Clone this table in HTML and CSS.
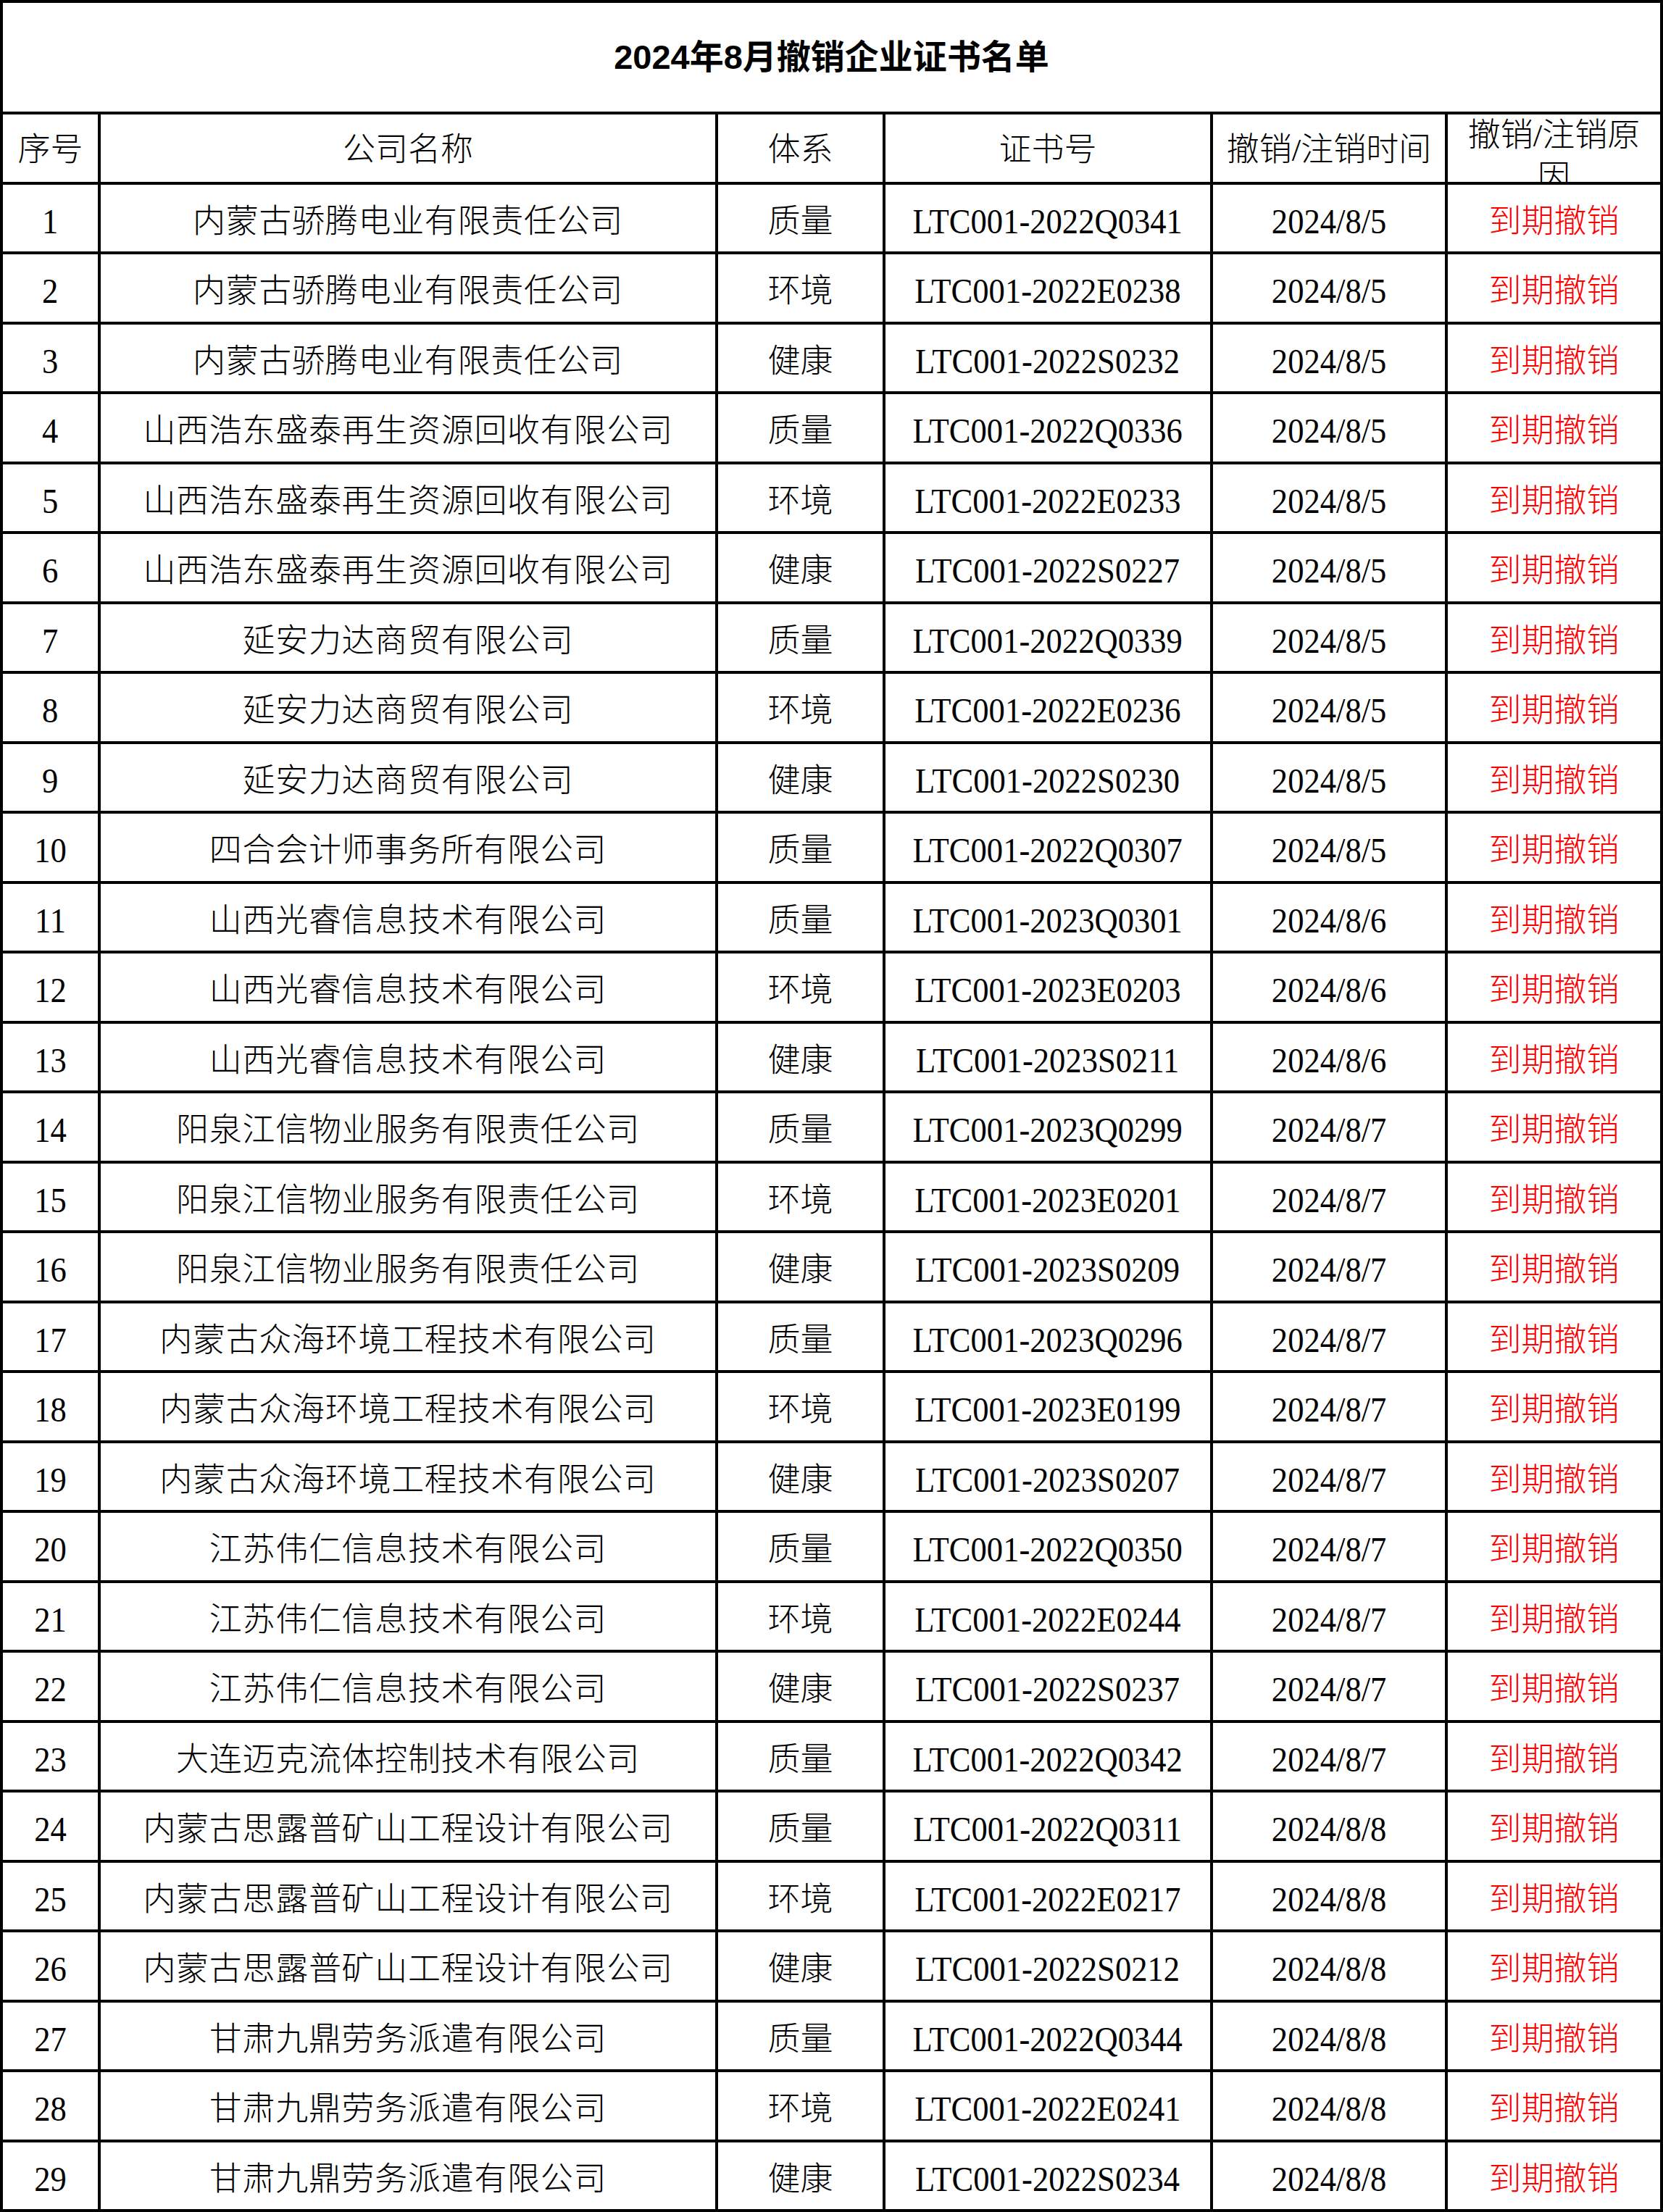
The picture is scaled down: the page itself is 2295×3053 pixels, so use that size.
FILE: index.html
```html
<!DOCTYPE html>
<html lang="zh-CN">
<head>
<meta charset="utf-8">
<title>2024年8月撤销企业证书名单</title>
<link rel="stylesheet" href="styles.css">
</head>
<body>
<div class="sheet">
  <div class="cell title">2024年8月撤销企业证书名单</div>

  <div class="cell head">序号</div>
  <div class="cell head">公司名称</div>
  <div class="cell head">体系</div>
  <div class="cell head">证书号</div>
  <div class="cell head">撤销/注销时间</div>
  <div class="cell head wrap">撤销/注销原因</div>

  <div class="cell"><span class="num">1</span></div><div class="cell name">内蒙古骄腾电业有限责任公司</div><div class="cell">质量</div><div class="cell"><span class="num">LTC001-2022Q0341</span></div><div class="cell"><span class="num">2024/8/5</span></div><div class="cell red">到期撤销</div>
  <div class="cell"><span class="num">2</span></div><div class="cell name">内蒙古骄腾电业有限责任公司</div><div class="cell">环境</div><div class="cell"><span class="num">LTC001-2022E0238</span></div><div class="cell"><span class="num">2024/8/5</span></div><div class="cell red">到期撤销</div>
  <div class="cell"><span class="num">3</span></div><div class="cell name">内蒙古骄腾电业有限责任公司</div><div class="cell">健康</div><div class="cell"><span class="num">LTC001-2022S0232</span></div><div class="cell"><span class="num">2024/8/5</span></div><div class="cell red">到期撤销</div>
  <div class="cell"><span class="num">4</span></div><div class="cell name">山西浩东盛泰再生资源回收有限公司</div><div class="cell">质量</div><div class="cell"><span class="num">LTC001-2022Q0336</span></div><div class="cell"><span class="num">2024/8/5</span></div><div class="cell red">到期撤销</div>
  <div class="cell"><span class="num">5</span></div><div class="cell name">山西浩东盛泰再生资源回收有限公司</div><div class="cell">环境</div><div class="cell"><span class="num">LTC001-2022E0233</span></div><div class="cell"><span class="num">2024/8/5</span></div><div class="cell red">到期撤销</div>
  <div class="cell"><span class="num">6</span></div><div class="cell name">山西浩东盛泰再生资源回收有限公司</div><div class="cell">健康</div><div class="cell"><span class="num">LTC001-2022S0227</span></div><div class="cell"><span class="num">2024/8/5</span></div><div class="cell red">到期撤销</div>
  <div class="cell"><span class="num">7</span></div><div class="cell name">延安力达商贸有限公司</div><div class="cell">质量</div><div class="cell"><span class="num">LTC001-2022Q0339</span></div><div class="cell"><span class="num">2024/8/5</span></div><div class="cell red">到期撤销</div>
  <div class="cell"><span class="num">8</span></div><div class="cell name">延安力达商贸有限公司</div><div class="cell">环境</div><div class="cell"><span class="num">LTC001-2022E0236</span></div><div class="cell"><span class="num">2024/8/5</span></div><div class="cell red">到期撤销</div>
  <div class="cell"><span class="num">9</span></div><div class="cell name">延安力达商贸有限公司</div><div class="cell">健康</div><div class="cell"><span class="num">LTC001-2022S0230</span></div><div class="cell"><span class="num">2024/8/5</span></div><div class="cell red">到期撤销</div>
  <div class="cell"><span class="num">10</span></div><div class="cell name">四合会计师事务所有限公司</div><div class="cell">质量</div><div class="cell"><span class="num">LTC001-2022Q0307</span></div><div class="cell"><span class="num">2024/8/5</span></div><div class="cell red">到期撤销</div>
  <div class="cell"><span class="num">11</span></div><div class="cell name">山西光睿信息技术有限公司</div><div class="cell">质量</div><div class="cell"><span class="num">LTC001-2023Q0301</span></div><div class="cell"><span class="num">2024/8/6</span></div><div class="cell red">到期撤销</div>
  <div class="cell"><span class="num">12</span></div><div class="cell name">山西光睿信息技术有限公司</div><div class="cell">环境</div><div class="cell"><span class="num">LTC001-2023E0203</span></div><div class="cell"><span class="num">2024/8/6</span></div><div class="cell red">到期撤销</div>
  <div class="cell"><span class="num">13</span></div><div class="cell name">山西光睿信息技术有限公司</div><div class="cell">健康</div><div class="cell"><span class="num">LTC001-2023S0211</span></div><div class="cell"><span class="num">2024/8/6</span></div><div class="cell red">到期撤销</div>
  <div class="cell"><span class="num">14</span></div><div class="cell name">阳泉江信物业服务有限责任公司</div><div class="cell">质量</div><div class="cell"><span class="num">LTC001-2023Q0299</span></div><div class="cell"><span class="num">2024/8/7</span></div><div class="cell red">到期撤销</div>
  <div class="cell"><span class="num">15</span></div><div class="cell name">阳泉江信物业服务有限责任公司</div><div class="cell">环境</div><div class="cell"><span class="num">LTC001-2023E0201</span></div><div class="cell"><span class="num">2024/8/7</span></div><div class="cell red">到期撤销</div>
  <div class="cell"><span class="num">16</span></div><div class="cell name">阳泉江信物业服务有限责任公司</div><div class="cell">健康</div><div class="cell"><span class="num">LTC001-2023S0209</span></div><div class="cell"><span class="num">2024/8/7</span></div><div class="cell red">到期撤销</div>
  <div class="cell"><span class="num">17</span></div><div class="cell name">内蒙古众海环境工程技术有限公司</div><div class="cell">质量</div><div class="cell"><span class="num">LTC001-2023Q0296</span></div><div class="cell"><span class="num">2024/8/7</span></div><div class="cell red">到期撤销</div>
  <div class="cell"><span class="num">18</span></div><div class="cell name">内蒙古众海环境工程技术有限公司</div><div class="cell">环境</div><div class="cell"><span class="num">LTC001-2023E0199</span></div><div class="cell"><span class="num">2024/8/7</span></div><div class="cell red">到期撤销</div>
  <div class="cell"><span class="num">19</span></div><div class="cell name">内蒙古众海环境工程技术有限公司</div><div class="cell">健康</div><div class="cell"><span class="num">LTC001-2023S0207</span></div><div class="cell"><span class="num">2024/8/7</span></div><div class="cell red">到期撤销</div>
  <div class="cell"><span class="num">20</span></div><div class="cell name">江苏伟仁信息技术有限公司</div><div class="cell">质量</div><div class="cell"><span class="num">LTC001-2022Q0350</span></div><div class="cell"><span class="num">2024/8/7</span></div><div class="cell red">到期撤销</div>
  <div class="cell"><span class="num">21</span></div><div class="cell name">江苏伟仁信息技术有限公司</div><div class="cell">环境</div><div class="cell"><span class="num">LTC001-2022E0244</span></div><div class="cell"><span class="num">2024/8/7</span></div><div class="cell red">到期撤销</div>
  <div class="cell"><span class="num">22</span></div><div class="cell name">江苏伟仁信息技术有限公司</div><div class="cell">健康</div><div class="cell"><span class="num">LTC001-2022S0237</span></div><div class="cell"><span class="num">2024/8/7</span></div><div class="cell red">到期撤销</div>
  <div class="cell"><span class="num">23</span></div><div class="cell name">大连迈克流体控制技术有限公司</div><div class="cell">质量</div><div class="cell"><span class="num">LTC001-2022Q0342</span></div><div class="cell"><span class="num">2024/8/7</span></div><div class="cell red">到期撤销</div>
  <div class="cell"><span class="num">24</span></div><div class="cell name">内蒙古思露普矿山工程设计有限公司</div><div class="cell">质量</div><div class="cell"><span class="num">LTC001-2022Q0311</span></div><div class="cell"><span class="num">2024/8/8</span></div><div class="cell red">到期撤销</div>
  <div class="cell"><span class="num">25</span></div><div class="cell name">内蒙古思露普矿山工程设计有限公司</div><div class="cell">环境</div><div class="cell"><span class="num">LTC001-2022E0217</span></div><div class="cell"><span class="num">2024/8/8</span></div><div class="cell red">到期撤销</div>
  <div class="cell"><span class="num">26</span></div><div class="cell name">内蒙古思露普矿山工程设计有限公司</div><div class="cell">健康</div><div class="cell"><span class="num">LTC001-2022S0212</span></div><div class="cell"><span class="num">2024/8/8</span></div><div class="cell red">到期撤销</div>
  <div class="cell"><span class="num">27</span></div><div class="cell name">甘肃九鼎劳务派遣有限公司</div><div class="cell">质量</div><div class="cell"><span class="num">LTC001-2022Q0344</span></div><div class="cell"><span class="num">2024/8/8</span></div><div class="cell red">到期撤销</div>
  <div class="cell"><span class="num">28</span></div><div class="cell name">甘肃九鼎劳务派遣有限公司</div><div class="cell">环境</div><div class="cell"><span class="num">LTC001-2022E0241</span></div><div class="cell"><span class="num">2024/8/8</span></div><div class="cell red">到期撤销</div>
  <div class="cell"><span class="num">29</span></div><div class="cell name">甘肃九鼎劳务派遣有限公司</div><div class="cell">健康</div><div class="cell"><span class="num">LTC001-2022S0234</span></div><div class="cell"><span class="num">2024/8/8</span></div><div class="cell red">到期撤销</div>
</div>
</body>
</html>
```

FILE: styles.css
```css
html, body {
  margin: 0;
  padding: 0;
  background: #ffffff;
}

.sheet {
  width: 2295px;
  box-sizing: border-box;
  display: grid;
  grid-template-columns: 131px 848px 227px 448px 320px 293px;
  grid-template-rows: 150px;
  grid-auto-rows: 92.5px;
  gap: 4px;
  padding: 4px;
  background: #000000;
  font-family: "Liberation Serif", "Noto Sans CJK SC", serif;
  font-size: 45px;
  font-weight: 300;
  color: #000000;
}

.cell {
  background: #ffffff;
  display: flex;
  align-items: center;
  justify-content: center;
  text-align: center;
  overflow: hidden;
  white-space: nowrap;
  line-height: 58px;
  padding-top: 10px;
  box-sizing: border-box;
}

.num {
  display: inline-block;
  font-size: 49px;
  transform: scaleX(0.91);
}

.name {
  letter-spacing: 0.7px;
}

.title {
  grid-column: 1 / -1;
  font-family: "Liberation Sans Narrow", "Liberation Sans", "Noto Sans CJK SC", sans-serif;
  font-weight: 700;
  font-size: 47px;
  padding-top: 0;
}

.head {
  padding-top: 6px;
}

.wrap {
  white-space: normal;
  align-items: flex-start;
  padding: 0 10px;
}

.red {
  color: #ff0000;
}
```
